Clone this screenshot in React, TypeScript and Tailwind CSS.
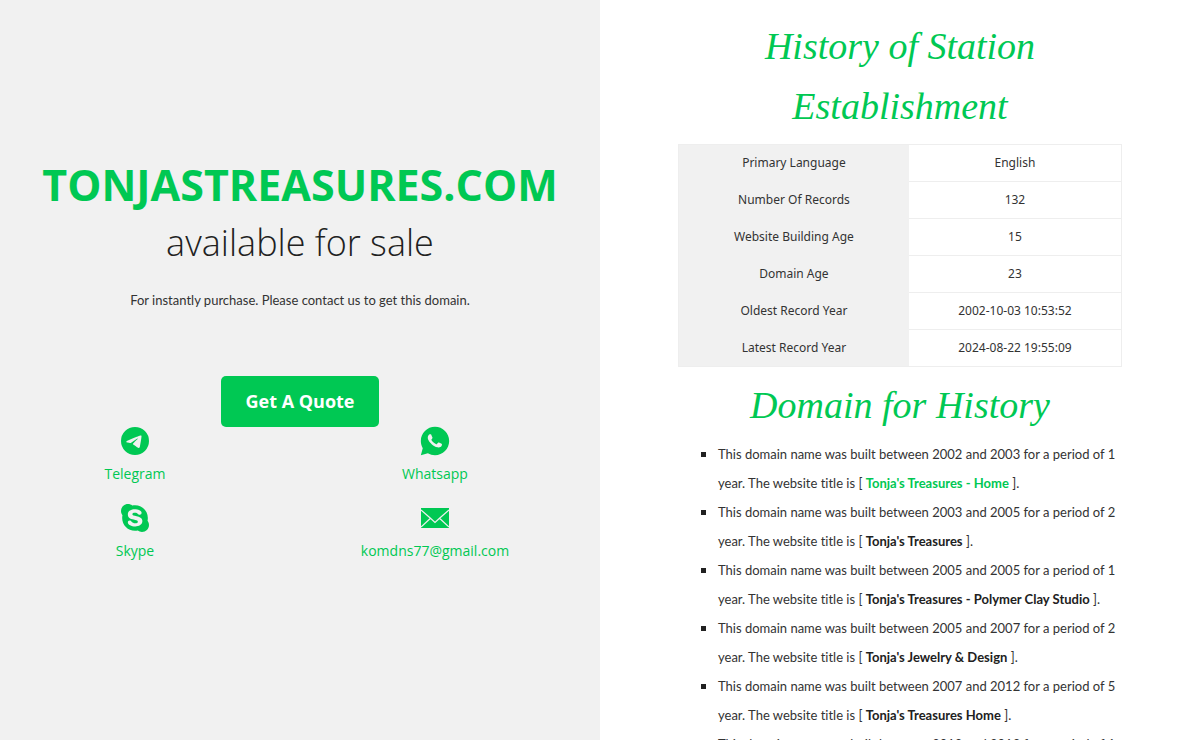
import type { ReactNode } from "react";
import { BsTelegram } from "react-icons/bs";
import { RiWhatsappFill } from "react-icons/ri";
import { FaSkype } from "react-icons/fa";

const facts: [string, string][] = [
  ["Primary Language", "English"],
  ["Number Of Records", "132"],
  ["Website Building Age", "15"],
  ["Domain Age", "23"],
  ["Oldest Record Year", "2002-10-03 10:53:52"],
  ["Latest Record Year", "2024-08-22 19:55:09"],
];

const periods = [
  { from: 2002, to: 2003, years: 1, title: "Tonja's Treasures - Home", link: true },
  { from: 2003, to: 2005, years: 2, title: "Tonja's Treasures" },
  { from: 2005, to: 2005, years: 1, title: "Tonja's Treasures - Polymer Clay Studio" },
  { from: 2005, to: 2007, years: 2, title: "Tonja's Jewelry & Design" },
  { from: 2007, to: 2012, years: 5, title: "Tonja's Treasures Home" },
  { from: 2012, to: 2013, years: 1, title: "Tonja's Treasures Home" },
];

function MailIcon() {
  return (
    <svg viewBox="0 0 28 28" className="size-7" fill="none" aria-hidden="true">
      <path d="M0 4h28v20H0z" fill="currentColor" />
      <path d="M0 6l9.5 8.2 4.5 4.3 4.5-4.3L28 6M0 23l9.5-8.8M28 23l-9.5-8.8" stroke="#f1f1f1" strokeWidth="1.2" />
    </svg>
  );
}

function Contact({ icon, label, href }: { icon: ReactNode; label: string; href: string }) {
  return (
    <a href={href} className="flex flex-col items-center pr-[30px] text-[#00c853]">
      <span className="flex h-7 items-center justify-center">{icon}</span>
      <span className="mt-[7px] text-[14px] leading-6">{label}</span>
    </a>
  );
}

function ScriptHeading({ children }: { children: ReactNode }) {
  return (
    <h2 className="text-center font-['Liberation_Serif',serif] text-[38px] leading-[60px] italic text-[#00c853]">
      {children}
    </h2>
  );
}

export default function App() {
  return (
    <div className="grid h-screen grid-cols-2 overflow-hidden bg-white font-['Open_Sans','Noto_Sans',sans-serif] text-[#212121]">
      <section className="flex flex-col items-center justify-center bg-[#f1f1f1] pb-[22px]">
        <h1 className="text-center">
          <span className="block text-[43px] leading-[58px] font-bold text-[#00c853]">TONJASTREASURES.COM</span>
          <span className="block text-[36px] leading-[58px] font-light">available for sale</span>
        </h1>
        <p className="mt-4 font-['Lato',sans-serif] text-[13px] leading-6 text-[#333333] [font-variant-ligatures:none]">
          For instantly purchase. Please contact us to get this domain.
        </p>
        <button type="button" className="mt-16 rounded-[5px] bg-[#00c853] px-6 py-3 text-lg leading-[27px] font-bold text-white">
          Get A Quote
        </button>
        <div className="grid w-full grid-cols-2 gap-y-[18px]">
          <Contact icon={<BsTelegram className="size-7" />} label="Telegram" href="#telegram" />
          <Contact icon={<RiWhatsappFill className="size-[34px]" />} label="Whatsapp" href="#whatsapp" />
          <Contact icon={<FaSkype className="size-8" />} label="Skype" href="#skype" />
          <Contact icon={<MailIcon />} label="komdns77@gmail.com" href="mailto:komdns77@gmail.com" />
        </div>
      </section>
      <main className="overflow-y-auto px-[78px] pt-4 [scrollbar-width:none]">
        <ScriptHeading>History of Station Establishment</ScriptHeading>
        <table className="mt-2 mb-2 w-full border-collapse border border-[#eeeeee] text-center font-['Noto_Sans',sans-serif] text-[12px] leading-5 text-[#333333]">
          <tbody>
            {facts.map(([name, value]) => (
              <tr key={name}>
                <th scope="row" className="w-[52%] bg-[#f1f1f1] py-2 font-normal">{name}</th>
                <td className="border-b border-[#eeeeee] py-2">{value}</td>
              </tr>
            ))}
          </tbody>
        </table>
        <ScriptHeading>Domain for History</ScriptHeading>
        <ul className="mt-[5px] list-[square] pl-10 font-['Lato',sans-serif] text-[13px] leading-[29px] text-[#333333] marker:text-base marker:leading-none marker:text-[#212121] [font-variant-ligatures:none]">
          {periods.map((p) => (
            <li key={p.from + "-" + p.to}>
              This domain name was built between {p.from} and {p.to} for a period of {p.years} year. The website title is [{" "}
              {p.link ? (
                <a href="#home" className="font-bold text-[#00c853]">{p.title}</a>
              ) : (
                <strong className="font-bold text-[#212121]">{p.title}</strong>
              )}{" "}
              ].
            </li>
          ))}
        </ul>
      </main>
    </div>
  );
}
